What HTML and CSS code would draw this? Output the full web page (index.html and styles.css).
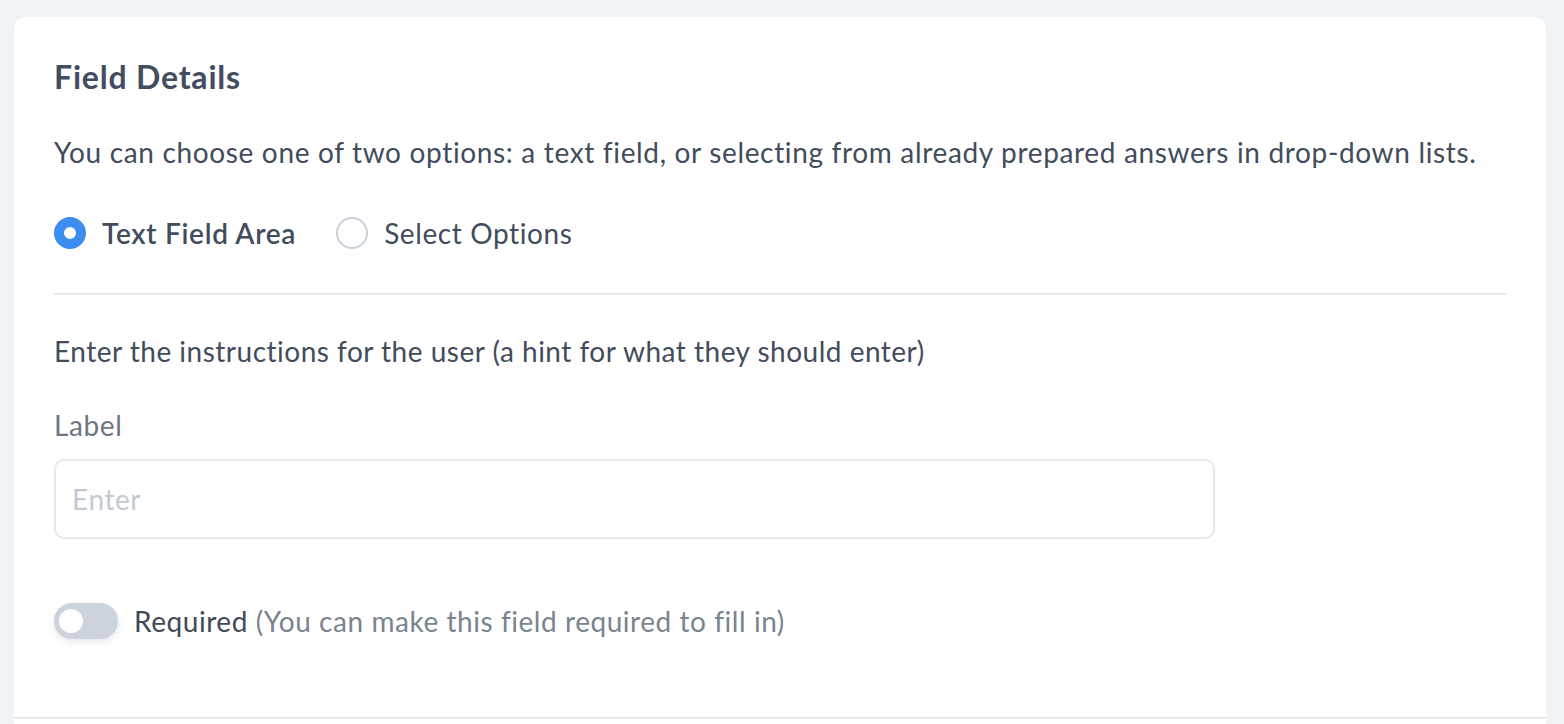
FILE: index.html
```html
<!DOCTYPE html>
<html lang="en">
<head>
<meta charset="utf-8">
<title>Field Details</title>
<link rel="stylesheet" href="styles.css">
</head>
<body>
<div class="page">
  <section class="card">
    <div class="card-body">
      <h2 class="title">Field Details</h2>
      <p class="desc">You can choose one of two options: a text field, or selecting from already prepared answers in drop-down lists.</p>
      <div class="radios">
        <label class="radio radio-on"><span class="dot"></span><span class="radio-text">Text Field Area</span></label>
        <label class="radio"><span class="dot"></span><span class="radio-text">Select Options</span></label>
      </div>
      <hr class="divider">
      <p class="hint">Enter the instructions for the user (a hint for what they should enter)</p>
      <div class="field-label">Label</div>
      <input class="input" type="text" placeholder="Enter">
      <div class="toggle-row">
        <span class="toggle"><span class="knob"></span></span>
        <span class="toggle-text">Required <span class="muted">(You can make this field required to fill in)</span></span>
      </div>
    </div>
    <div class="card-footer"></div>
  </section>
</div>
</body>
</html>
```
FILE: styles.css
```css
* { box-sizing: border-box; }
html, body { margin: 0; padding: 0; }
body {
  background: #eff3f6;
  font-family: "Lato", "Liberation Sans", sans-serif;
  color: #424c5d;
  letter-spacing: 0.6px;
}
.page {
  padding: 17px 18px 0 14px;
}
.card {
  background: #ffffff;
  border-radius: 12px;
  display: flex;
  flex-direction: column;
}
.card-body {
  padding: 40px 40px 0 40px;
}
.title {
  margin: 0;
  font-size: 32px;
  line-height: 40px;
  font-weight: 700;
  letter-spacing: 0.8px;
  color: #434d5f;
}
.desc {
  margin: 35px 0 0 0;
  font-size: 28px;
  line-height: 40px;
  letter-spacing: 0.66px;
}
.radios {
  display: flex;
  align-items: center;
  gap: 40px;
  margin-top: 41px;
  height: 40px;
}
.radio {
  display: flex;
  align-items: center;
  gap: 16px;
  font-size: 28px;
  line-height: 40px;
}
.dot {
  width: 32px;
  height: 32px;
  border-radius: 50%;
  border: 2px solid #c8d0da;
  background: #fff;
  flex: none;
}
.radio-on .dot {
  border: 10px solid #3d8df0;
  background: #fff;
}
.radio-on .radio-text {
  font-weight: 600;
  letter-spacing: 0.7px;
}
.divider {
  margin: 40px 0 0 0;
  border: 0;
  height: 2px;
  background: #e6e8ec;
}
.hint {
  margin: 36px 0 0 0;
  font-size: 28px;
  line-height: 40px;
  letter-spacing: 0.5px;
}
.field-label {
  margin-top: 34px;
  font-size: 28px;
  line-height: 40px;
  color: #6c7684;
}
.input {
  display: block;
  margin-top: 14px;
  width: 1161px;
  height: 80px;
  border: 2px solid #e6e8ec;
  border-radius: 10px;
  padding: 0 16px;
  font-family: inherit;
  font-size: 28px;
  letter-spacing: 0.6px;
  color: #424c5d;
  outline: none;
}
.input::placeholder { color: #c3c9d2; }
.toggle-row {
  display: flex;
  align-items: center;
  gap: 16px;
  margin-top: 64px;
  height: 36px;
}
.toggle {
  width: 64px;
  height: 36px;
  border-radius: 18px;
  background: #cdd3db;
  display: flex;
  align-items: center;
  padding-left: 5px;
  box-shadow: 0 3px 6px rgba(60, 70, 90, 0.12);
  flex: none;
}
.knob {
  width: 24px;
  height: 24px;
  border-radius: 50%;
  background: #fff;
}
.toggle-text {
  font-size: 28px;
  line-height: 40px;
  color: #3f4957;
  letter-spacing: 0.55px;
}
.muted { color: #7a8491; }
.card-footer {
  margin-top: 78px;
  border-top: 2px solid #e6e8ec;
  height: 80px;
}
```
